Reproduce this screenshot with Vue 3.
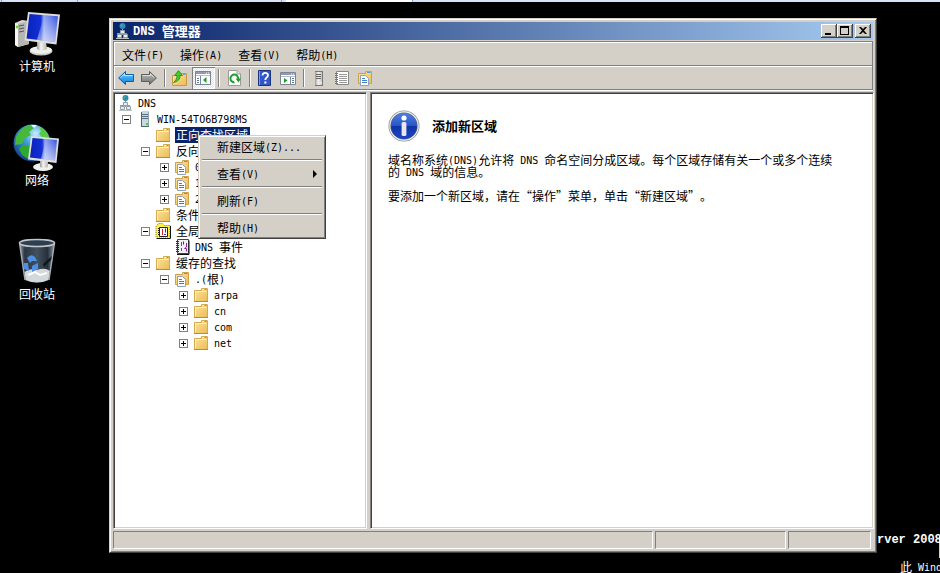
<script setup>
import { h, ref } from 'vue'

// Latin runs are set in a half-width face beside full-width Chinese glyphs.
const T = (props) =>
  h(
    'span',
    { class: 'txt' },
    props.s
      .split(/([\x20-\x7e]+)/)
      .filter(Boolean)
      .map((part) => (/^[\x20-\x7e]/.test(part) ? h('span', { class: 'half' }, part) : part))
  )
T.props = ['s']

const menus = ['文件(F)', '操作(A)', '查看(V)', '帮助(H)']

const tools = [
  { icon: 'back', label: '后退' },
  { icon: 'forward', label: '前进' },
  { sep: true },
  { icon: 'up', label: '上一级' },
  { icon: 'panel', label: '显示/隐藏控制台树', on: true },
  { sep: true },
  { icon: 'refresh', label: '刷新' },
  { sep: true },
  { icon: 'help', label: '帮助' },
  { icon: 'action', label: '显示/隐藏操作窗格' },
  { sep: true },
  { icon: 'tower', label: '新建服务器' },
  { icon: 'list', label: '新建记录' },
  { icon: 'zone', label: '新建区域' }
]

const nodes = [
  { level: 0, icon: 'dns', text: 'DNS' },
  { level: 1, box: '-', icon: 'server', text: 'WIN-54TO6B798MS' },
  { level: 2, icon: 'folder', text: '正向查找区域', selected: true },
  { level: 2, box: '-', icon: 'folder', text: '反向查找区域' },
  { level: 3, box: '+', icon: 'zone', text: '0.in-addr.arpa' },
  { level: 3, box: '+', icon: 'zone', text: '127.in-addr.arpa' },
  { level: 3, box: '+', icon: 'zone', text: '255.in-addr.arpa' },
  { level: 2, icon: 'folder', text: '条件转发器' },
  { level: 2, box: '-', icon: 'logs', text: '全局日志' },
  { level: 3, icon: 'event', text: 'DNS 事件' },
  { level: 2, box: '-', icon: 'folder', text: '缓存的查找' },
  { level: 3, box: '-', icon: 'zone', text: '.(根)' },
  { level: 4, box: '+', icon: 'folder', text: 'arpa' },
  { level: 4, box: '+', icon: 'folder', text: 'cn' },
  { level: 4, box: '+', icon: 'folder', text: 'com' },
  { level: 4, box: '+', icon: 'folder', text: 'net' }
]

const context = [
  { text: '新建区域(Z)...' },
  { text: '查看(V)', sub: true },
  { text: '刷新(F)' },
  { text: '帮助(H)' }
]

const shortcuts = [
  { icon: 'computer', text: '计算机' },
  { icon: 'network', text: '网络' },
  { icon: 'bin', text: '回收站' }
]

const selected = ref(nodes.findIndex((n) => n.selected))
</script>

<template>
  <div class="screen" lang="zh-CN">
    <svg class="defs" width="0" height="0" aria-hidden="true">
      <defs>
        <linearGradient id="gFolder" x1="0" y1="0" x2="1" y2="1">
          <stop offset="0" stop-color="#ffe69a" /><stop offset="1" stop-color="#e9bb58" />
        </linearGradient>
        <linearGradient id="gBlue" x1="0" y1="0" x2="0" y2="1">
          <stop offset="0" stop-color="#8fdcff" /><stop offset=".5" stop-color="#35a6ef" /><stop offset="1" stop-color="#1678cf" />
        </linearGradient>
        <linearGradient id="gGrey" x1="0" y1="0" x2="0" y2="1">
          <stop offset="0" stop-color="#c4c4c4" /><stop offset="1" stop-color="#707070" />
        </linearGradient>
        <linearGradient id="gScreen" x1="0" y1="0" x2="1" y2="0">
          <stop offset="0" stop-color="#0a22b8" /><stop offset=".45" stop-color="#1230d8" /><stop offset=".55" stop-color="#8fa4f2" /><stop offset="1" stop-color="#3350dc" />
        </linearGradient>
        <linearGradient id="gShine" x1="0" y1="0" x2="0" y2="1">
          <stop offset="0" stop-color="#fff" stop-opacity="0" /><stop offset="1" stop-color="#fff" stop-opacity=".55" />
        </linearGradient>
        <linearGradient id="gMetal" x1="0" y1="0" x2="1" y2="0">
          <stop offset="0" stop-color="#9a9a98" /><stop offset=".4" stop-color="#f4f4f2" /><stop offset="1" stop-color="#b4b4b0" />
        </linearGradient>
        <radialGradient id="gGlobe" cx=".6" cy=".25" r=".8">
          <stop offset="0" stop-color="#c6eeff" /><stop offset=".4" stop-color="#3f9fdc" /><stop offset="1" stop-color="#123a86" />
        </radialGradient>
        <linearGradient id="gInfo" x1="0" y1="0" x2="0" y2="1">
          <stop offset="0" stop-color="#4f7fe0" /><stop offset=".48" stop-color="#2b56c6" /><stop offset=".52" stop-color="#1233a8" /><stop offset="1" stop-color="#1c46c4" />
        </linearGradient>
        <linearGradient id="gBin" x1="0" y1="0" x2="1" y2="0">
          <stop offset="0" stop-color="#9aa4ac" /><stop offset=".15" stop-color="#2b3640" /><stop offset=".5" stop-color="#42525f" /><stop offset=".8" stop-color="#26303a" /><stop offset="1" stop-color="#8c969e" />
        </linearGradient>
      </defs>
      <symbol id="i-back" viewBox="0 0 16 16"><path d="M.6 8 7.500 1.500V4.500H15.500V11.500H7.500V14.500Z" fill="url(#gBlue)" stroke="#0f5ca8" /><path d="M2.500 7.600 6.500 3.800V5.500H14.500" fill="none" stroke="#b5ebff" /></symbol>
      <symbol id="i-forward" viewBox="0 0 16 16"><path d="M15.400 8 8.500 1.500V4.500H.5V11.500H8.500V14.500Z" fill="url(#gGrey)" stroke="#5c5c5c" /><path d="M1.500 5.500H9.500V4L13 7.500" fill="none" stroke="#dedede" /></symbol>
      <symbol id="i-folder" viewBox="0 0 16 16"><path d="M1.500 3.500H8.500V1.500H14.500V14.500H1.500Z" fill="url(#gFolder)" stroke="#d6a850" /><path d="M9.500 2.500H11.500" stroke="#fff" /><path d="M11.500 2.500H13.500" stroke="#4ba3d8" /><path d="M2.500 13V4.500H13.500" fill="none" stroke="#fff1bf" /><path d="M1 14.500H15" stroke="#b98c33" /></symbol>
      <symbol id="i-up" viewBox="0 0 16 16"><path d="M.5 5.500H8.500V3.500H14.500V15.500H.5Z" fill="url(#gFolder)" stroke="#c99a40" /><path d="M11 4.500H13.500" stroke="#4ba3d8" /><path d="M1.500 12.500C6 11.500 8.500 9 8 5.500H10.500L6.500.6 2.500 5.500H5C5 8 4 10.500 1.500 12.500Z" fill="#45c82e" stroke="#218a1a" stroke-width=".8" /></symbol>
      <symbol id="i-panel" viewBox="0 0 16 16"><path d="M.5 1.500H15.500V14.500H.5Z" fill="#fff" stroke="#7c8595" /><path d="M1 2H15V4H1Z" fill="#8f9bb0" /><path d="M11 3H12M13 3H14" stroke="#fff" /><path d="M1 5.500H15" stroke="#b6bdca" /><path d="M5.500 6V14" stroke="#7c8595" /><path d="M2 8.500H4M2 10.500H4M2 12.500H4" stroke="#5578aa" /><path d="M11.500 7V13L8 10Z" fill="#1f9a28" /></symbol>
      <symbol id="i-action" viewBox="0 0 16 16"><path d="M.5 2.500H15.500V14.500H.5Z" fill="#fff" stroke="#7c8595" /><path d="M1 3H15V5H1Z" fill="#8f9bb0" /><path d="M11 4H12M13 4H14" stroke="#fff" /><path d="M1 6.500H15" stroke="#b6bdca" /><path d="M10.500 7V14" stroke="#7c8595" /><path d="M12 8.500H14M12 10.500H14M12 12.500H14" stroke="#5578aa" /><path d="M4 8V13L7.500 10.500Z" fill="#1f9a28" /></symbol>
      <symbol id="i-refresh" viewBox="0 0 16 16"><path d="M2.500.5H11L14.500 4V15.500H2.500Z" fill="#fff" stroke="#9a9a9a" /><path d="M11 .5V4H14.500" fill="#e4e4e4" stroke="#9a9a9a" /><path d="M8.500 12.400A3.900 3.900 0 1 1 12.200 9" fill="none" stroke="#1f9e2d" stroke-width="2" /><path d="M9.500 8.500H15L12.500 12.500Z" fill="#1f9e2d" /></symbol>
      <symbol id="i-help" viewBox="0 0 16 16"><path d="M1.500.5H13.500V15.500H1.500Z" fill="#3156c8" stroke="#1b347f" /><path d="M2.500 1V15" stroke="#7f9cec" /><path d="M5.500 5.500C5.500 2 11 2.200 11 5.200 11 7.500 8.300 7.200 8.300 10" fill="none" stroke="#fff" stroke-width="1.800" /><path d="M7.300 11.500H9.400V13.500H7.300Z" fill="#fff" /></symbol>
      <symbol id="i-tower" viewBox="0 0 16 16"><path d="M4 1H12V15H4Z" fill="url(#gMetal)" /><path d="M4 1H12V2H4Z" fill="#777" /><path d="M5 4.500H10M5 6.500H10M5 8.500H10" stroke="#666" /><path d="M11.500 1V15M4 15.500H12" stroke="#777" /><path d="M9 12H11V13.500H9Z" fill="#eee" /></symbol>
      <symbol id="i-server" viewBox="0 0 16 16"><path d="M5 1 7 .5H13V15L5 15.500Z" fill="#8ca3b0" /><path d="M6 1H12V15H6Z" fill="#c9d8e0" /><path d="M6 3.500H12M6 5.500H12M6 7.500H12" stroke="#587080" /><path d="M5.500 1V15.500M5 15.500H13" stroke="#506470" /><path d="M10 12H12V14H10Z" fill="#4bd02a" /></symbol>
      <symbol id="i-list" viewBox="0 0 16 16"><path d="M2.500 1.500H14.500V14.500H2.500Z" fill="#fff" stroke="#888" /><path d="M5 4.500H13M5 6.500H13M5 8.500H13M5 10.500H13M5 12.500H13" stroke="#9a9a9a" /><path d="M1 3.500H4M1 5.500H4M1 7.500H4M1 9.500H4M1 11.500H4M1 13.500H4" stroke="#777" /></symbol>
      <symbol id="i-zone" viewBox="0 0 16 16"><path d="M1.500 3.500H8.500V1.500H14.500V13.500H1.500Z" fill="url(#gFolder)" stroke="#d2a04a" /><path d="M10 2.500H13.500" stroke="#4ba3d8" /><path d="M3.500 5.500H8.500L11.500 8.500V15.500H3.500Z" fill="#fff" stroke="#8da3bd" /><path d="M5 8.500H8M5 10.500H10M5 12.500H10" stroke="#3d7fc8" /></symbol>
      <symbol id="i-dns" viewBox="0 0 16 16"><path d="M8.500 5V12M3 10.500H13" stroke="#999" /><circle cx="8.500" cy="3" r="3" fill="#2c86cf" /><path d="M6 2.500 8 .5 9 2 7.500 4ZM9.500 3.500H11L9.500 5.500Z" fill="#3fb650" /><path d="M6.500 7.500H10.500V10.500H6.500ZM3.500 11.500H7.500V14.500H3.500ZM9.500 11.500H13.500V14.500H9.500Z" fill="#e8edf0" stroke="#939ea5" /><path d="M2 15.500H15" stroke="#b9c0c4" /></symbol>
      <symbol id="i-logs" viewBox="0 0 16 16"><path d="M1 3.500 3.500.5H7.500L9 2.500H15V14H1Z" fill="#fff04a" stroke="#8a7a10" stroke-dasharray="1 1" /><path d="M15.500 3V15.500H1.500" fill="none" stroke="#111" /><path d="M4.500 4.500H12.500V13.500H4.500Z" fill="#fff" stroke="#222" /><path d="M3 5.500H5M3 7.500H5M3 9.500H5M3 11.500H5" stroke="#222" /><path d="M7.500 6V12" stroke="#d82020" /><path d="M10.500 5.500V9.500M9 11.500H11" stroke="#2030c8" /></symbol>
      <symbol id="i-event" viewBox="0 0 16 16"><path d="M3.500.5H14.500V14.500H3.500Z" fill="#f1eef5" stroke="#444" /><path d="M15 1.500V15.500H3" fill="none" stroke="#111" /><path d="M2 2.500H5M2 4.500H5M2 6.500H5M2 8.500H5M2 10.500H5M2 12.500H5" stroke="#333" /><path d="M7.500 3V7M7.500 9V12" stroke="#d82020" /><path d="M9.500 2.500V5.500" stroke="#2030c8" /><path d="M12.500 4V8L10.500 9.500H12.500V12.500" fill="none" stroke="#8a2a9a" /></symbol>
      <symbol id="i-computer" viewBox="0 0 48 48"><path d="M2 13 9 10 16 11V34L5 37 2 35Z" fill="#d5d5d2" /><path d="M2 13 5 14V37L2 35Z" fill="#f7f7f5" /><path d="M5 14 16 11V34L5 37Z" fill="#b5b5b2" /><path d="M6 16 11 15M6 19 11 18M6 22 11 21" stroke="#555" /><circle cx="4" cy="17" r="1.400" fill="#53e01c" /><ellipse cx="28" cy="41" rx="11.500" ry="4.500" fill="#c9c9c6" /><ellipse cx="28" cy="40" rx="11" ry="3.800" fill="#f0f0ee" /><path d="M24 32H33L34 39Q29 42 24 39Z" fill="url(#gMetal)" /><path d="M15 2 47 4.500 43.500 34.500 11.500 30.500Z" fill="#dededb" /><path d="M16.500 4 45 6.300 42 32 13.500 28.500Z" fill="url(#gScreen)" /><path d="M31 5.200 45 6.300 42 32 24 29.800Z" fill="url(#gShine)" /></symbol>
      <symbol id="i-network" viewBox="0 0 48 48"><circle cx="19" cy="19" r="18.500" fill="url(#gGlobe)" /><path d="M3 13Q8 3 17 1L21 4 16 8 18 11 12 14 9 20 2 21Z" fill="#46b83c" /><path d="M26 2Q34 6 36 13L30 14 26 10 28 7Z" fill="#58c848" /><path d="M10 21 16 22 19 27 15 35 9 31 6 25Z" fill="#2fa92d" /><path d="M18 1 24 1 21 4Z" fill="#f2fff4" /><ellipse cx="30" cy="43" rx="10" ry="4" fill="#f0f0ee" /><path d="M27 36H35V43Q31 45 27 43Z" fill="url(#gMetal)" /><path d="M18 12 46 14.500 43.500 39 15 35.500Z" fill="#dededb" /><path d="M19.500 14 44 16 42 36.500 17 33.500Z" fill="url(#gScreen)" /><path d="M33 15 44 16 42 36.500 28 34.800Z" fill="url(#gShine)" /></symbol>
      <symbol id="i-bin" viewBox="0 0 48 48"><path d="M6.500 5H41.500L36 42Q24 47 12 42Z" fill="url(#gBin)" /><path d="M30 26 40 17V20L31 29Z" fill="#11181e" /><path d="M11.500 34Q16 30 24 32 32 29 37 33L35.500 42Q24 47 12.500 42Z" fill="#d4d8da" /><path d="M15 37 22 34 27 37 34 35" stroke="#fff" stroke-width="2" fill="none" /><path d="M6.500 5 12 42M41.500 5 36 42" stroke="#a4adb4" stroke-width="1.400" fill="none" /><ellipse cx="24" cy="5" rx="17.500" ry="3.500" fill="#2d3f52" stroke="#c0c6ca" stroke-width="1.500" /><path d="M14 20Q18 15 22 19L24 23H19L17 25ZM11 25 15 25 16 33 11 31ZM19 28 25 25V31L19 34Z" fill="#4f8fe6" /></symbol>
    </svg>

    <div class="strip"><i></i><i></i><i></i><i class="lit"></i><i></i></div>

    <div class="desktop">
      <nav class="shortcuts" aria-label="桌面">
        <a v-for="s in shortcuts" :key="s.icon" href="#" class="shortcut">
          <svg class="big" viewBox="0 0 48 48"><use :href="'#i-' + s.icon" /></svg>
          <T :s="s.text" />
        </a>
      </nav>

      <main class="window">
        <header class="title">
          <svg class="ico"><use href="#i-dns" /></svg>
          <h1><T s="DNS 管理器" /></h1>
          <div class="controls">
            <button class="ctl" aria-label="最小化"><svg viewBox="0 0 12 10"><path d="M2 7H8V9H2Z" /></svg></button>
            <button class="ctl" aria-label="最大化"><svg viewBox="0 0 12 10"><path d="M1 0H10V9H1ZM2 2V8H9V2Z" fill-rule="evenodd" /></svg></button>
            <button class="ctl close" aria-label="关闭"><svg viewBox="0 0 12 10"><path d="M2 1H4L6 3 8 1H10L7 4.500 10 8H8L6 6 4 8H2L5 4.500Z" /></svg></button>
          </div>
        </header>

        <div class="bars">
          <div class="menubar">
            <button v-for="m in menus" :key="m" class="menu-btn"><T :s="m" /></button>
          </div>
          <div class="toolbar">
            <template v-for="(t, i) in tools" :key="i">
              <span v-if="t.sep" class="sep"></span>
              <button v-else class="tool" :class="{ on: t.on }" :aria-label="t.label">
                <svg class="ico"><use :href="'#i-' + t.icon" /></svg>
              </button>
            </template>
          </div>
        </div>

        <div class="panes">
          <section class="pane tree-pane">
            <ul class="tree">
              <li v-for="(n, i) in nodes" :key="i" class="node" :class="'l' + n.level">
                <span class="twist">
                  <button v-if="n.box" class="box" :aria-label="n.box === '+' ? '展开' : '折叠'">
                    <svg viewBox="0 0 7 7"><path :d="n.box === '+' ? 'M1 3H6V4H1ZM3 1H4V6H3Z' : 'M1 3H6V4H1Z'" /></svg>
                  </button>
                </span>
                <svg class="ico"><use :href="'#i-' + n.icon" /></svg>
                <button class="label" :class="{ sel: i === selected }" @click="selected = i"><T :s="n.text" /></button>
              </li>
            </ul>
            <div class="context" role="menu">
              <template v-for="(c, i) in context" :key="i">
                <hr v-if="i" />
                <button role="menuitem" class="ctx-item">
                  <T :s="c.text" />
                  <svg v-if="c.sub" class="arrow" viewBox="0 0 4 8"><path d="M0 0 4 4 0 8Z" /></svg>
                </button>
              </template>
            </div>
          </section>

          <section class="pane detail">
            <div class="head">
              <svg class="info" viewBox="0 0 32 32">
                <circle cx="16" cy="16" r="15.500" fill="#8b8f96" /><circle cx="16" cy="16" r="14.700" fill="#f2f3f5" /><circle cx="16" cy="16" r="13.600" fill="#5d6878" /><circle cx="16" cy="16" r="13" fill="url(#gInfo)" />
                <circle cx="16" cy="8" r="2.600" fill="#fff" /><rect x="13.600" y="12" width="4.800" height="14" rx="1.500" fill="#e8e8ea" />
              </svg>
              <h2>添加新区域</h2>
            </div>
            <p><T s="域名称系统(DNS)允许将 DNS 命名空间分成区域。每个区域存储有关一个或多个连续的 DNS 域的信息。" /></p>
            <p><T s="要添加一个新区域，请在“操作”菜单，单击“新建区域”。" /></p>
          </section>
        </div>

        <footer class="status"><span></span><span></span><span></span></footer>
      </main>

      <aside class="edition">
        <div class="name"><T s="rver 2008" /></div>
        <div class="copy"><T s="此 Wind" /></div>
      </aside>
    </div>
  </div>
</template>

<style>
body {
  background: #000;
  overflow: hidden;
}
.half {
  font-family: "DejaVu Sans Mono", monospace;
  font-size: 10px;
  line-height: 0;
  vertical-align: 1px;
}
h1 .half,
.name .half {
  font-family: "Liberation Mono", monospace;
  font-size: 12px;
}
</style>

<style scoped>
.screen {
  display: flex;
  flex-direction: column;
  min-height: 100vh;
  background: #000;
  color: #000;
  font: 12px/16px "Noto Sans CJK SC", sans-serif;
  text-spacing-trim: space-all;
}
.defs {
  position: absolute;
}
button {
  margin: 0;
  padding: 0;
  border: 0;
  background: none;
  color: inherit;
  font: inherit;
  text-align: left;
  white-space: nowrap;
}
svg {
  display: block;
  flex: none;
}
.ico {
  width: 16px;
  height: 16px;
}
.strip {
  display: grid;
  grid-template-columns: 2px 76px 204px 131px 1fr;
  height: 2px;
  background: #d7e3f7;
}
.strip i {
  border-right: 1px solid #8aa0c0;
}
.strip i:last-child {
  border: 0;
}
.strip .lit {
  background: #fff;
  border-left: 4px solid #d7e3f7;
}
.desktop {
  flex: 1;
  display: grid;
  grid-template-columns: 109px minmax(0, 1fr) 63px;
}
.shortcuts {
  display: flex;
  flex-direction: column;
  gap: 50px;
  padding: 8px 0 0;
  width: 74px;
}
.shortcut {
  display: flex;
  flex-direction: column;
  align-items: center;
  color: #fff;
  text-decoration: none;
}
.big {
  width: 48px;
  height: 48px;
}
.window {
  display: flex;
  flex-direction: column;
  margin: 16px 0 20px;
  padding: 2px;
  background: #d4d0c8;
  border: 1px solid #404040;
  border-left-color: #d4d0c8;
  border-top-color: #d4d0c8;
  box-shadow: inset 1px 1px #fff, inset -1px -1px #808080;
}
.title {
  display: flex;
  align-items: center;
  gap: 3px;
  margin: 1px 1px 0;
  height: 18px;
  padding: 0 2px 0 1px;
  background: linear-gradient(90deg, #0a246a, #a6caf0);
  color: #fff;
}
h1 {
  flex: 1;
  margin: 0;
  font-size: 13px;
  line-height: 18px;
}
.controls {
  display: flex;
}
.ctl {
  width: 16px;
  height: 14px;
  padding: 2px;
  background: #d4d0c8;
  border: 0;
  box-shadow: inset -1px -1px #404040, inset 1px 1px #fff, inset -2px -2px #808080;
}
.ctl svg {
  width: 12px;
  height: 10px;
}
.close {
  margin-left: 2px;
}
.bars {
  display: grid;
  grid-template-rows: 24px 25px;
  margin: 1px 1px 2px;
}
.menubar,
.toolbar {
  display: flex;
  align-items: center;
  border: 1px solid #808080;
  box-shadow: inset 1px 1px #fff, 0 1px #fff;
}
.menubar {
  padding: 2px 0 0;
  border-bottom: 0;
}
.toolbar {
  padding: 1px 1px 0;
}
.menu-btn {
  padding: 0 8px;
}
.tool {
  width: 23px;
  height: 22px;
  padding: 3px;
}
.tool.on {
  background: repeating-conic-gradient(#fff 0 25%, #e4e1dc 0 50%) 0 0 / 2px 2px;
  box-shadow: inset 1px 1px #808080, inset -1px -1px #fff;
}
.sep {
  width: 2px;
  height: 18px;
  margin: 0 3px;
  background: linear-gradient(90deg, #808080 50%, #fff 50%);
}
.panes {
  flex: 1;
  display: grid;
  grid-template-columns: 254px minmax(0, 1fr);
  gap: 3px;
  margin: 0 0 2px 1px;
}
.pane {
  position: relative;
  background: #fff;
  border: 1px solid #fff;
  border-left-color: #808080;
  border-top-color: #808080;
  box-shadow: inset 1px 1px #404040, inset -1px -1px #d4d0c8;
  padding: 1px;
}
.tree {
  margin: 0;
  padding: 1px 0 0 2px;
  list-style: none;
}
.node {
  display: flex;
  align-items: center;
  height: 16px;
}
.node.l2 {
  padding-left: 19px;
}
.node.l3 {
  padding-left: 38px;
}
.node.l4 {
  padding-left: 57px;
}
.twist {
  width: 19px;
  padding-left: 5px;
  box-sizing: border-box;
}
.l0 .twist {
  display: none;
}
.box {
  display: block;
  width: 9px;
  height: 9px;
  border: 1px solid #808080;
  background: #fff;
}
.box svg {
  width: 7px;
  height: 7px;
}
.label {
  height: 16px;
  margin-left: 4px;
  padding: 0 2px 0 1px;
}
.label.sel {
  background: #0a246a;
  color: #fff;
}
.context {
  position: absolute;
  left: 84px;
  top: 42px;
  width: 128px;
  box-sizing: border-box;
  padding: 2px 2px 1px;
  background: #d4d0c8;
  border: 1px solid #404040;
  border-left-color: #d4d0c8;
  border-top-color: #d4d0c8;
  box-shadow: inset 1px 1px #fff, inset -1px -1px #808080;
}
.ctx-item {
  display: flex;
  align-items: center;
  justify-content: space-between;
  width: 100%;
  height: 18px;
  padding: 0 6px 0 16px;
}
.arrow {
  width: 4px;
  height: 8px;
}
.context hr {
  height: 1px;
  margin: 3px 1px 4px;
  border: 0;
  background: #808080;
  border-bottom: 1px solid #fff;
}
.detail {
  padding: 17px 32px 17px 17px;
}
.head {
  display: flex;
  align-items: center;
  gap: 12px;
}
.info {
  width: 32px;
  height: 32px;
}
h2 {
  margin: 0;
  font-size: 13px;
  line-height: 16px;
}
p {
  margin: 12px 0 0;
  line-height: 12px;
}
.status {
  display: grid;
  grid-template-columns: minmax(0, 1fr) 131px 83px;
  gap: 2px;
  margin: 0 3px 1px 1px;
}
.status span {
  height: 16px;
  border: 1px solid #fff;
  border-left-color: #808080;
  border-top-color: #808080;
}
.edition {
  display: flex;
  flex-direction: column;
  justify-content: flex-end;
  gap: 3px;
  overflow: hidden;
  color: #fff;
  white-space: nowrap;
}
.name {
  height: 22px;
  line-height: 6px;
  font-weight: bold;
  border-right: 1px solid #d4d0c8;
}
.copy {
  padding-left: 23px;
  line-height: 12px;
}
</style>
